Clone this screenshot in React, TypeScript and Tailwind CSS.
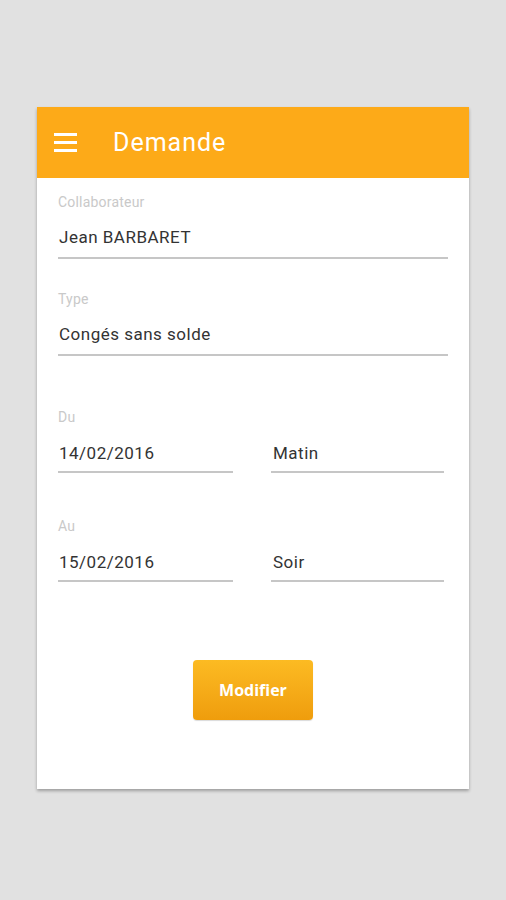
import React from 'react';

function Field({ label, value }: { label: string; value: string }) {
  return (
    <div className="flex flex-col">
      <span className="text-[14px] leading-none tracking-[0.2px] text-[#c9c9c9]">{label}</span>
      <span className="mt-[20px] px-[1px] text-[17px] leading-none tracking-[0.5px] text-[#333]">{value}</span>
      <div className="mt-[11px] h-[2px] bg-[#c6c6c6]" />
    </div>
  );
}

function DateRow({ label, date, period }: { label: string; date: string; period: string }) {
  return (
    <div className="flex flex-col">
      <span className="text-[14px] leading-none tracking-[0.2px] text-[#c9c9c9]">{label}</span>
      <div className="mt-[21px] flex gap-[38px] pr-[4px]">
        <div className="flex w-[175px] flex-col">
          <span className="px-[1px] text-[17px] leading-none tracking-[0.5px] text-[#333]">{date}</span>
          <div className="mt-[9px] h-[2px] bg-[#c6c6c6]" />
        </div>
        <div className="flex flex-1 flex-col">
          <span className="px-[2px] text-[17px] leading-none tracking-[0.5px] text-[#333]">{period}</span>
          <div className="mt-[9px] h-[2px] bg-[#c6c6c6]" />
        </div>
      </div>
    </div>
  );
}

export default function App() {
  return (
    <div className="flex h-[900px] w-[506px] justify-center bg-[#e1e1e1] pt-[107px] font-['Roboto',sans-serif]">
      <div className="flex h-[682px] w-[432px] flex-col bg-white shadow-[0_2px_3px_rgba(0,0,0,0.3)]">
        <header className="flex h-[71px] items-center bg-[#fdaa18] pl-[17px]">
          <div className="flex w-[23px] flex-col gap-[5px]">
            <span className="h-[3px] bg-white" />
            <span className="h-[3px] bg-white" />
            <span className="h-[3px] bg-white" />
          </div>
          <h1 className="ml-[36px] text-[25px] leading-none tracking-[1px] text-white">Demande</h1>
        </header>
        <div className="flex flex-col px-[21px] pt-[17px]">
          <Field label="Collaborateur" value="Jean BARBARET" />
          <div className="mt-[33px]">
            <Field label="Type" value="Congés sans solde" />
          </div>
          <div className="mt-[54px]">
            <DateRow label="Du" date="14/02/2016" period="Matin" />
          </div>
          <div className="mt-[46px]">
            <DateRow label="Au" date="15/02/2016" period="Soir" />
          </div>
          <div className="mt-[78px] flex justify-center">
            <button className="h-[60px] w-[120px] rounded-[4px] bg-gradient-to-b from-[#fcbb22] to-[#ef9d0c] font-['Open_Sans',sans-serif] text-[16px] font-bold text-white shadow-[0_1px_1px_rgba(0,0,0,0.15)]">
              Modifier
            </button>
          </div>
        </div>
      </div>
    </div>
  );
}
